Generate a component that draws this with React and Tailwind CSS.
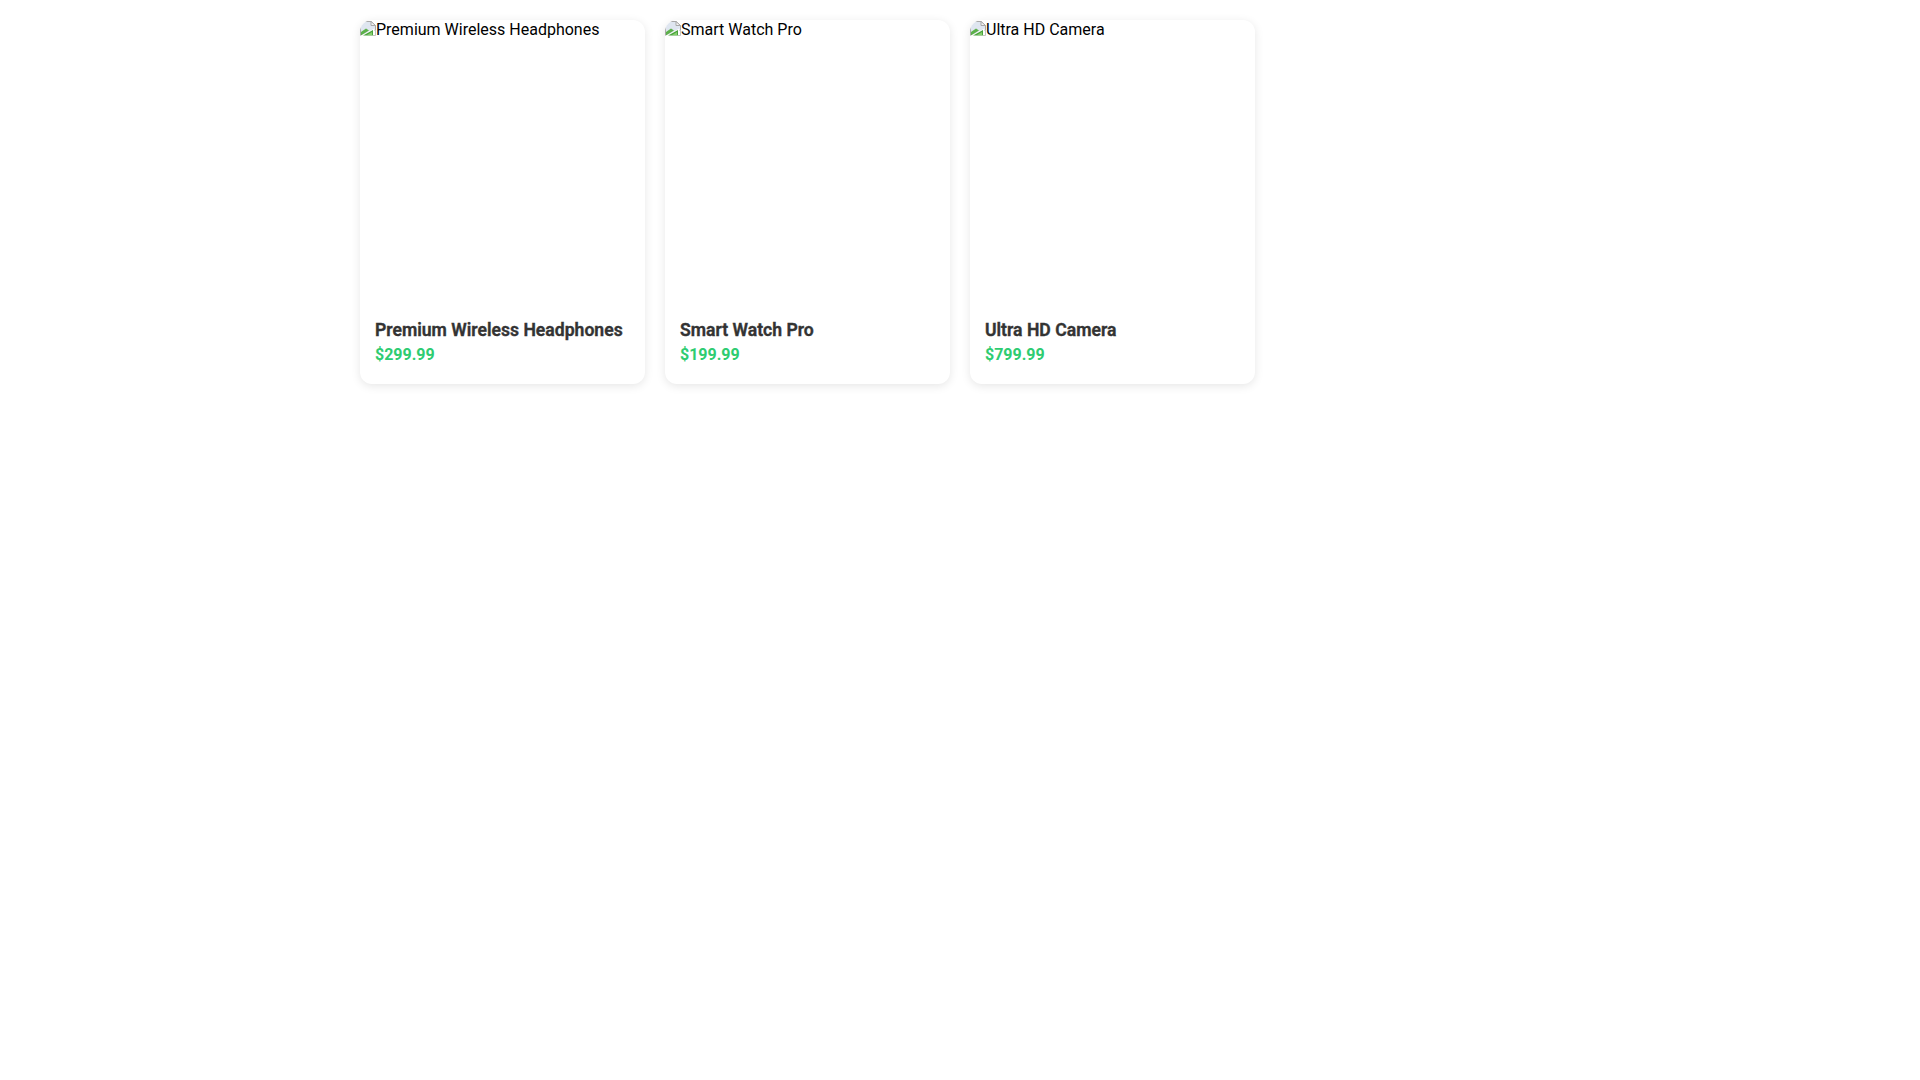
import React from "react";

const products = [
  { name: "Premium Wireless Headphones", price: "$299.99" },
  { name: "Smart Watch Pro", price: "$199.99" },
  { name: "Ultra HD Camera", price: "$799.99" },
];

// stand-in for the browser's broken image marker
const BrokenImage = () => (
  <svg width="16" height="16" viewBox="0 0 16 16" className="shrink-0">
    <path d="M0.5 1.5H11L15.5 5.5V10L0.5 15.5Z" fill="#dfe6f0" stroke="#a8a8a8" />
    <path d="M11 1.5V5.5H15.5Z" fill="#f4f4f4" stroke="#a8a8a8" />
    <path d="M1 15.5V12L6 8.5L9 10.5Z" fill="#5cb04a" />
    <path d="M0 16H14.5V8.5Z" fill="#ffffff" />
    <path d="M3 15.5L13 10V15.5Z" fill="#4aa23c" />
    <path d="M7 15L12 12V15Z" fill="#86cf6e" />
    <path d="M15.5 10V15.5H13" fill="none" stroke="#c4c4c4" />
  </svg>
);

const ProductCard = ({ name, price }) => (
  <div className="bg-white rounded-xl overflow-hidden shadow-[0_2px_10px_rgba(0,0,0,0.1)]">
    <div className="h-[280px] flex items-start text-base leading-5 text-black">
      <BrokenImage />
      <span>{name}</span>
    </div>
    <div className="px-[15px] pt-[18px] pb-[17px]">
      <h3 className="text-[17.6px] font-semibold text-[#333333] leading-[25px] [-webkit-text-stroke:0.4px_#333333]">{name}</h3>
      <p className="text-base font-bold text-[#2ecc71] leading-6">{price}</p>
    </div>
  </div>
);

export default function App() {
  return (
    <div className="min-h-screen bg-white font-['Roboto',sans-serif]">
      <div className="max-w-[1200px] mx-auto pt-5 grid grid-cols-4 gap-5">
        {products.map((p) => (
          <ProductCard key={p.name} name={p.name} price={p.price} />
        ))}
      </div>
    </div>
  );
}
